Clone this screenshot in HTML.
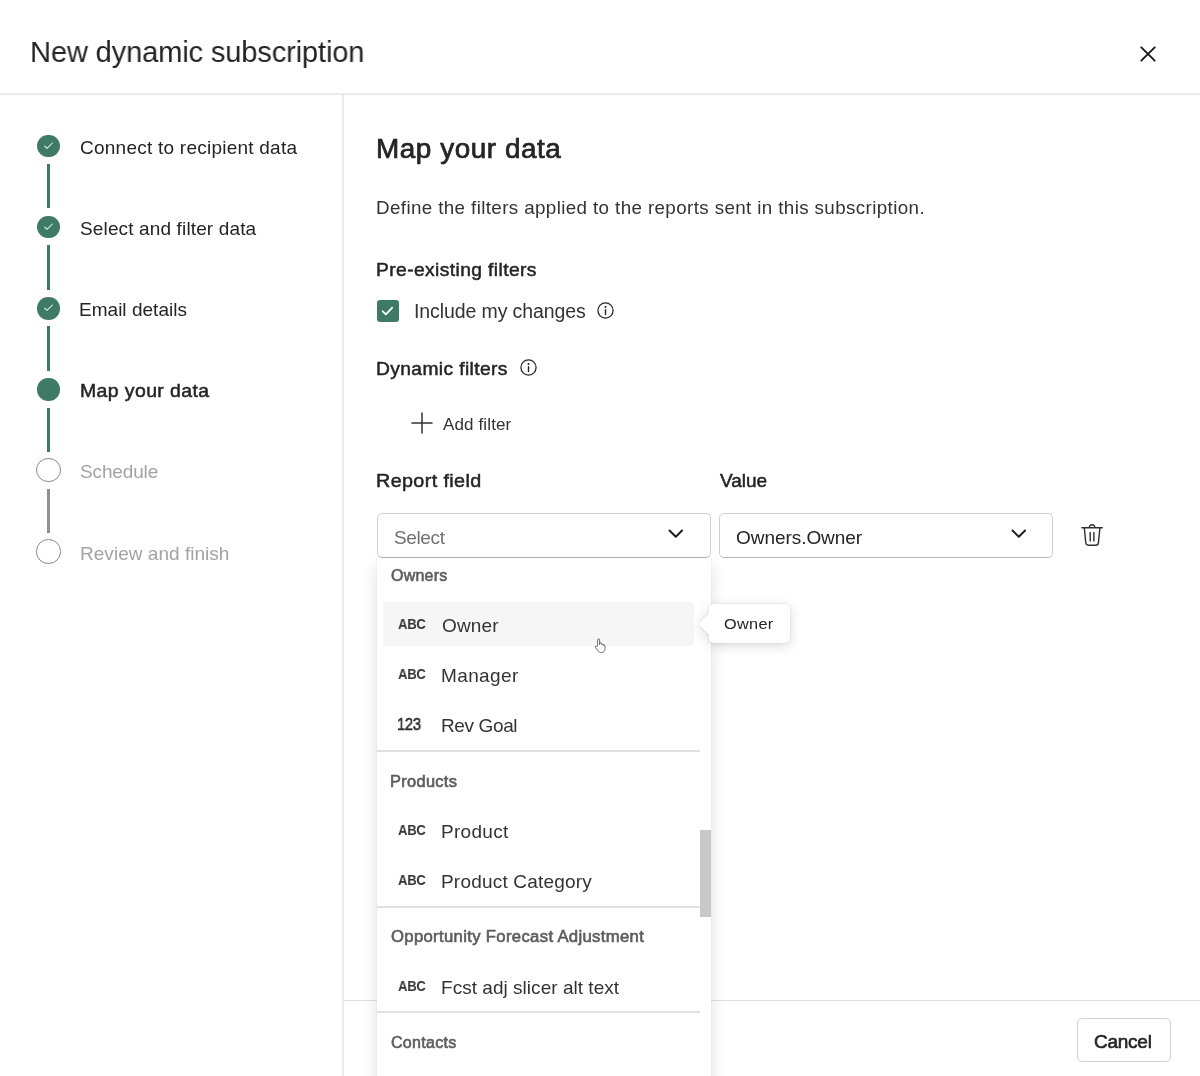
<!DOCTYPE html>
<html><head><meta charset="utf-8">
<style>
*{box-sizing:border-box;margin:0;padding:0}
html,body{width:1200px;height:1076px;overflow:hidden;background:#fff}
body{font-family:"Liberation Sans",sans-serif;color:#242424;position:relative}
.a{position:absolute;white-space:nowrap}
.t{will-change:transform}
.dot{width:22.5px;height:22.5px;border-radius:50%;background:#3f7a65;left:37px}
.dot.e{left:36px;width:24.5px;height:24.5px;background:#fff;border:1.3px solid #8a8a8a}
.conn{left:47.3px;width:2.7px;background:#3f7a65}
.sel{top:513.4px;height:44.6px;border:1px solid #d1d1d1;border-bottom-color:#b5b5b5;border-radius:5px;background:#fff}
.sep{left:377px;width:323px;height:1.5px;background:#e0e0e0}
</style></head><body>

<div class="a" style="left:0;top:93px;width:1200px;height:2px;background:#ebebeb"></div>
<div class="a" style="left:342px;top:95px;width:2px;height:981px;background:#ebebeb"></div>
<div class="a t" style="left:30px;top:33px;font-size:29.5px;line-height:38px;letter-spacing:-0.15px;font-weight:normal;color:#242424;transform:scaleX(0.986);transform-origin:0 0;">New dynamic subscription</div>
<svg class="a" style="left:1138.2px;top:44.4px" width="20" height="20" viewBox="0 0 20 20"><path d="M3.3 3.3L16.7 16.7M16.7 3.3L3.3 16.7" stroke="#1a1a1a" stroke-width="1.9" stroke-linecap="round"/></svg>
<div class="a conn" style="top:164.25px;height:43.75px;background:#3f7a65"></div>
<div class="a conn" style="top:245px;height:44.5px;background:#3f7a65"></div>
<div class="a conn" style="top:326.25px;height:44.25px;background:#3f7a65"></div>
<div class="a conn" style="top:407.5px;height:44.0px;background:#3f7a65"></div>
<div class="a conn" style="top:488.5px;height:44.5px;background:#919191"></div>
<div class="a dot" style="top:134.5px"></div>
<svg class="a" style="left:37px;top:134.5px" width="22.5" height="22.5" viewBox="0 0 22.5 22.5"><path d="M7.7 11.1l2.3 2.2 5.4-5.3" stroke="#dff5ec" stroke-width="1.05" fill="none" stroke-linecap="round" stroke-linejoin="round"/></svg>
<div class="a dot" style="top:215.5px"></div>
<svg class="a" style="left:37px;top:215.5px" width="22.5" height="22.5" viewBox="0 0 22.5 22.5"><path d="M7.7 11.1l2.3 2.2 5.4-5.3" stroke="#dff5ec" stroke-width="1.05" fill="none" stroke-linecap="round" stroke-linejoin="round"/></svg>
<div class="a dot" style="top:297px"></div>
<svg class="a" style="left:37px;top:297px" width="22.5" height="22.5" viewBox="0 0 22.5 22.5"><path d="M7.7 11.1l2.3 2.2 5.4-5.3" stroke="#dff5ec" stroke-width="1.05" fill="none" stroke-linecap="round" stroke-linejoin="round"/></svg>
<div class="a dot" style="top:378px"></div>
<div class="a dot e" style="top:457.5px"></div>
<div class="a dot e" style="top:539px"></div>
<div class="a t" style="left:80px;top:135px;font-size:19.0px;line-height:25px;letter-spacing:0.24px;font-weight:normal;color:#242424;">Connect to recipient data</div>
<div class="a t" style="left:80px;top:216px;font-size:19.0px;line-height:25px;letter-spacing:0.14px;font-weight:normal;color:#242424;">Select and filter data</div>
<div class="a t" style="left:79px;top:297px;font-size:19.0px;line-height:25px;letter-spacing:0.02px;font-weight:normal;color:#242424;">Email details</div>
<div class="a t" style="left:80px;top:378px;font-size:19.0px;line-height:25px;letter-spacing:0.38px;font-weight:normal;color:#242424;-webkit-text-stroke:0.5px #242424;transform:scaleX(1.024);transform-origin:0 0;">Map your data</div>
<div class="a t" style="left:80px;top:459px;font-size:19.0px;line-height:25px;letter-spacing:-0.14px;font-weight:normal;color:#a3a3a3;">Schedule</div>
<div class="a t" style="left:80px;top:541px;font-size:19.0px;line-height:25px;letter-spacing:0.03px;font-weight:normal;color:#a3a3a3;">Review and finish</div>
<div class="a t" style="left:376px;top:132px;font-size:27.0px;line-height:35px;letter-spacing:0.54px;font-weight:normal;color:#242424;-webkit-text-stroke:0.7px #242424;transform:scaleX(1.032);transform-origin:0 0;">Map your data</div>
<div class="a t" style="left:376px;top:196px;font-size:18.5px;line-height:24px;letter-spacing:0.37px;font-weight:normal;color:#333333;transform:scaleX(1.016);transform-origin:0 0;">Define the filters applied to the reports sent in this subscription.</div>
<div class="a t" style="left:376px;top:257px;font-size:19.0px;line-height:25px;letter-spacing:0.38px;font-weight:normal;color:#242424;-webkit-text-stroke:0.5px #242424;transform:scaleX(1.014);transform-origin:0 0;">Pre-existing filters</div>
<div class="a t" style="left:414px;top:299px;font-size:19.5px;line-height:25px;letter-spacing:-0.1px;font-weight:normal;color:#333333;">Include my changes</div>
<div class="a t" style="left:376px;top:356px;font-size:19.0px;line-height:25px;letter-spacing:0.38px;font-weight:normal;color:#242424;-webkit-text-stroke:0.5px #242424;transform:scaleX(1.012);transform-origin:0 0;">Dynamic filters</div>
<div class="a t" style="left:443px;top:414px;font-size:17.0px;line-height:22px;letter-spacing:0.13px;font-weight:normal;color:#333333;">Add filter</div>
<div class="a t" style="left:376px;top:468px;font-size:19.0px;line-height:25px;letter-spacing:0.38px;font-weight:normal;color:#242424;-webkit-text-stroke:0.5px #242424;transform:scaleX(1.038);transform-origin:0 0;">Report field</div>
<div class="a t" style="left:720px;top:468px;font-size:19.0px;line-height:25px;letter-spacing:0.0px;font-weight:normal;color:#242424;-webkit-text-stroke:0.5px #242424;">Value</div>
<div class="a" style="left:377px;top:300px;width:22px;height:22px;border-radius:3px;background:#3f7a65"></div>
<svg class="a" style="left:377px;top:300px" width="22" height="22" viewBox="0 0 22 22"><path d="M5.7 11.3L8.9 14.4L15.2 7.7" stroke="#fff" stroke-width="1.8" fill="none" stroke-linecap="round" stroke-linejoin="round"/></svg>
<svg class="a" style="left:595.6px;top:301.25px" width="19" height="19" viewBox="0 0 19 19"><circle cx="9.5" cy="9.5" r="7.6" stroke="#242424" stroke-width="1.25" fill="none"/><circle cx="9.5" cy="6.1" r="1" fill="#242424"/><path d="M9.5 8.7v4.8" stroke="#242424" stroke-width="1.4" stroke-linecap="round"/></svg>
<svg class="a" style="left:518.6px;top:358.0px" width="19" height="19" viewBox="0 0 19 19"><circle cx="9.5" cy="9.5" r="7.6" stroke="#242424" stroke-width="1.25" fill="none"/><circle cx="9.5" cy="6.1" r="1" fill="#242424"/><path d="M9.5 8.7v4.8" stroke="#242424" stroke-width="1.4" stroke-linecap="round"/></svg>
<svg class="a" style="left:411.25px;top:411.75px" width="22" height="22" viewBox="0 0 22 22"><path d="M11 1v20M1 11h20" stroke="#333" stroke-width="1.5" stroke-linecap="round"/></svg>
<div class="a sel" style="left:377px;width:334px"></div>
<div class="a sel" style="left:719px;width:334px"></div>
<div class="a t" style="left:394px;top:525px;font-size:19.0px;line-height:25px;letter-spacing:-0.38px;font-weight:normal;color:#707070;">Select</div>
<div class="a t" style="left:736px;top:525px;font-size:19.0px;line-height:25px;letter-spacing:-0.05px;font-weight:normal;color:#242424;">Owners.Owner</div>
<svg class="a" style="left:668.2px;top:528.6px" width="15.6" height="9.6" viewBox="0 0 15.6 9.6"><path d="M1.5 1.5l6.3 6.3 6.3-6.3" stroke="#1a1a1a" stroke-width="1.9" fill="none" stroke-linecap="round" stroke-linejoin="round"/></svg>
<svg class="a" style="left:1010.7px;top:528.6px" width="15.6" height="9.6" viewBox="0 0 15.6 9.6"><path d="M1.5 1.5l6.3 6.3 6.3-6.3" stroke="#1a1a1a" stroke-width="1.9" fill="none" stroke-linecap="round" stroke-linejoin="round"/></svg>
<svg class="a" style="left:1080px;top:523px" width="24" height="25" viewBox="0 0 24 25"><path d="M1.9 4.7h20.4M9.3 4.5a2.8 2.8 0 0 1 5.6 0M4.3 5l1.5 14.8a2.7 2.7 0 0 0 2.7 2.4h7.2a2.7 2.7 0 0 0 2.7-2.4L19.9 5M10.2 9.4v8.6M13.9 9.4v8.6" stroke="#2e2e2e" stroke-width="1.4" fill="none" stroke-linecap="round" stroke-linejoin="round"/></svg>
<div class="a" style="left:344px;top:1000px;width:856px;height:1px;background:#e0e0e0"></div>
<div class="a" style="left:1076.5px;top:1018px;width:94px;height:44px;border:1px solid #d1d1d1;border-radius:5px;background:#fff"></div>
<div class="a t" style="left:1094px;top:1029px;font-size:19.0px;line-height:25px;letter-spacing:-0.25px;font-weight:normal;color:#242424;-webkit-text-stroke:0.6px #242424;">Cancel</div>
<div class="a" style="left:377px;top:557.5px;width:334px;height:530px;background:#fff;border-radius:0 0 4px 4px;box-shadow:0 0 2px rgba(0,0,0,.10),0 8px 16px rgba(0,0,0,.13)"></div>
<div class="a" style="left:382.5px;top:602px;width:311px;height:43.5px;background:#f6f6f6;border-radius:4px"></div>
<div class="a sep" style="top:750px"></div>
<div class="a sep" style="top:906px"></div>
<div class="a sep" style="top:1011.4px"></div>
<div class="a t" style="left:391px;top:565px;font-size:16.0px;line-height:21px;letter-spacing:0.22px;font-weight:normal;color:#5c5c5c;-webkit-text-stroke:0.6px #5c5c5c;">Owners</div>
<div class="a t" style="left:398px;top:615px;font-size:14.5px;line-height:19px;letter-spacing:-0.29px;font-weight:bold;color:#333333;transform:scaleX(0.905);transform-origin:0 0;">ABC</div>
<div class="a t" style="left:442px;top:613px;font-size:19.0px;line-height:25px;letter-spacing:0.18px;font-weight:normal;color:#333333;">Owner</div>
<div class="a t" style="left:398px;top:665px;font-size:14.5px;line-height:19px;letter-spacing:-0.29px;font-weight:bold;color:#333333;transform:scaleX(0.905);transform-origin:0 0;">ABC</div>
<div class="a t" style="left:441px;top:663px;font-size:19.0px;line-height:25px;letter-spacing:0.38px;font-weight:normal;color:#333333;">Manager</div>
<div class="a t" style="left:397px;top:714px;font-size:16.5px;line-height:21px;letter-spacing:-0.33px;font-weight:normal;color:#2b2b2b;-webkit-text-stroke:0.55px #2b2b2b;transform:scaleX(0.894);transform-origin:0 0;">123</div>
<div class="a t" style="left:441px;top:713px;font-size:19.0px;line-height:25px;letter-spacing:-0.38px;font-weight:normal;color:#333333;">Rev Goal</div>
<div class="a t" style="left:390px;top:771px;font-size:16.0px;line-height:21px;letter-spacing:0.32px;font-weight:normal;color:#5c5c5c;-webkit-text-stroke:0.6px #5c5c5c;transform:scaleX(1.023);transform-origin:0 0;">Products</div>
<div class="a t" style="left:398px;top:821px;font-size:14.5px;line-height:19px;letter-spacing:-0.29px;font-weight:bold;color:#333333;transform:scaleX(0.905);transform-origin:0 0;">ABC</div>
<div class="a t" style="left:441px;top:819px;font-size:19.0px;line-height:25px;letter-spacing:0.3px;font-weight:normal;color:#333333;">Product</div>
<div class="a t" style="left:398px;top:871px;font-size:14.5px;line-height:19px;letter-spacing:-0.29px;font-weight:bold;color:#333333;transform:scaleX(0.905);transform-origin:0 0;">ABC</div>
<div class="a t" style="left:441px;top:869px;font-size:19.0px;line-height:25px;letter-spacing:0.2px;font-weight:normal;color:#333333;">Product Category</div>
<div class="a t" style="left:391px;top:926px;font-size:16.0px;line-height:21px;letter-spacing:0.32px;font-weight:normal;color:#5c5c5c;-webkit-text-stroke:0.6px #5c5c5c;transform:scaleX(1.042);transform-origin:0 0;">Opportunity Forecast Adjustment</div>
<div class="a t" style="left:398px;top:977px;font-size:14.5px;line-height:19px;letter-spacing:-0.29px;font-weight:bold;color:#333333;transform:scaleX(0.905);transform-origin:0 0;">ABC</div>
<div class="a t" style="left:441px;top:975px;font-size:19.0px;line-height:25px;letter-spacing:0.03px;font-weight:normal;color:#333333;">Fcst adj slicer alt text</div>
<div class="a t" style="left:391px;top:1032px;font-size:16.0px;line-height:21px;letter-spacing:0.29px;font-weight:normal;color:#5c5c5c;-webkit-text-stroke:0.6px #5c5c5c;">Contacts</div>
<div class="a" style="left:700px;top:830px;width:10.7px;height:86.5px;background:#c8c8c8"></div>
<div class="a" style="left:709px;top:604px;width:81px;height:39px;filter:drop-shadow(0 0 1px rgba(0,0,0,.12)) drop-shadow(0 3px 6px rgba(0,0,0,.14))"><div class="a" style="left:0;top:0;width:81px;height:39px;background:#fff;border-radius:5px"></div><div class="a" style="left:-7px;top:10.7px;width:18px;height:18px;background:#fff;transform:rotate(45deg);border-radius:2px"></div></div>
<div class="a t" style="left:724px;top:614px;font-size:15.5px;line-height:20px;letter-spacing:0.31px;font-weight:normal;color:#242424;transform:scaleX(1.049);transform-origin:0 0;">Owner</div>
<svg class="a" style="left:594px;top:638px" width="12" height="15" viewBox="0 0 12 15"><path d="M3.6 8.2V2a1 1 0 0 1 2 0v4.6l.2-1.1a.9.9 0 0 1 1.8.2l.1.9a.9.9 0 0 1 1.7.3v.7a.8.8 0 0 1 1.6.2v3c0 2.300-1.400 3.700-3.600 3.700-2 0-2.800-.7-3.900-2.400L1.300 9.300c-.5-.9.600-1.700 1.300-1z" fill="#fff" stroke="#4a4a4a" stroke-width=".8" stroke-linejoin="round"/></svg>
</body></html>
